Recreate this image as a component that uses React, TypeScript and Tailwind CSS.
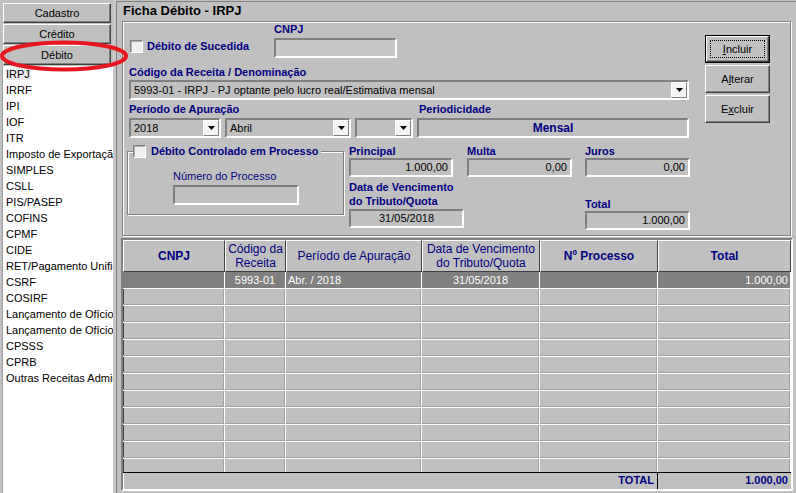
import React from 'react';

const sunken = 'border-2 border-t-[#808080] border-l-[#808080] border-b-white border-r-white';
const lbl = 'text-[11px] font-bold text-[#000080] leading-[14px] whitespace-nowrap';

function Check() {
  return (
    <span className="inline-block w-[13px] h-[13px] shrink-0 bg-[#f0f0f0] border border-t-[#808080] border-l-[#808080] border-b-white border-r-white shadow-[inset_1px_1px_0_#b0b0b0]" />
  );
}

function Arrow() {
  return (
    <div className="w-[16px] shrink-0 flex items-center justify-center bg-[#f4f4f4] border border-t-white border-l-white border-b-[#808080] border-r-[#808080]">
      <svg width="7" height="4" viewBox="0 0 7 4">
        <path d="M0 0H7L3.5 4Z" fill="#000" />
      </svg>
    </div>
  );
}

function Select({ className, children }: { className: string; children?: React.ReactNode }) {
  return (
    <div className={`flex h-[20px] bg-[#c0c0c0] ${sunken} ${className}`}>
      <div className="flex-1 flex items-center pl-[3px] overflow-hidden whitespace-nowrap text-[11px] text-black">
        {children}
      </div>
      <Arrow />
    </div>
  );
}

function Field({ className, children, center }: { className: string; children?: React.ReactNode; center?: boolean }) {
  return (
    <div
      className={`flex items-center bg-[#c0c0c0] text-[11px] text-black whitespace-nowrap px-[3px] ${
        center ? 'justify-center' : 'justify-end'
      } ${sunken} ${className}`}
    >
      {children}
    </div>
  );
}

function WinBtn({ children, focused }: { children: React.ReactNode; focused?: boolean }) {
  if (focused) {
    return (
      <div className="h-[28px] border border-black flex">
        <div className="flex-1 flex p-[3px] bg-[#c0c0c0] border border-t-white border-l-white border-b-[#404040] border-r-[#404040] shadow-[inset_-1px_-1px_0_#808080]">
          <div className="flex-1 flex items-center justify-center border border-dotted border-black text-[11px] text-black">
            {children}
          </div>
        </div>
      </div>
    );
  }
  return (
    <div className="h-[28px] flex items-center justify-center bg-[#c0c0c0] border border-t-white border-l-white border-b-[#404040] border-r-[#404040] shadow-[inset_-1px_-1px_0_#808080] text-[11px] text-black">
      {children}
    </div>
  );
}

function NavBtn({ children }: { children: React.ReactNode }) {
  return (
    <div className="h-[20px] flex items-center justify-center bg-[#c0c0c0] border border-t-white border-l-white border-b-[#404040] border-r-[#404040] shadow-[inset_-1px_-1px_0_#808080] text-[11px] text-black">
      {children}
    </div>
  );
}

const items = [
  'IRPJ',
  'IRRF',
  'IPI',
  'IOF',
  'ITR',
  'Imposto de Exportação',
  'SIMPLES',
  'CSLL',
  'PIS/PASEP',
  'COFINS',
  'CPMF',
  'CIDE',
  'RET/Pagamento Unificado',
  'CSRF',
  'COSIRF',
  'Lançamento de Ofício',
  'Lançamento de Ofício',
  'CPSSS',
  'CPRB',
  'Outras Receitas Administradas',
];

const colW = ['w-[102px]', 'w-[61px]', 'w-[136px]', 'w-[118px]', 'w-[118px]', 'w-[133px]'];

const headers: { node: React.ReactNode; bold?: boolean }[] = [
  { node: 'CNPJ', bold: true },
  { node: (<>Código da<br />Receita</>) },
  { node: 'Período de Apuração' },
  { node: (<>Data de Vencimento<br />do Tributo/Quota</>) },
  { node: 'Nº Processo', bold: true },
  { node: 'Total', bold: true },
];

function Row({ dark }: { dark?: boolean }) {
  const vals = dark ? ['', '5993-01', 'Abr. / 2018', '31/05/2018', '', '1.000,00'] : ['', '', '', '', '', ''];
  const aligns = ['text-left', 'text-center', 'text-left', 'text-center', 'text-left', 'text-right'];
  return (
    <div className="flex h-[17px]">
      {vals.map((v, i) => (
        <div
          key={i}
          className={`${colW[i]} ${aligns[i]} shrink-0 border-b border-r border-white text-[11px] leading-[16px] px-[2px] whitespace-nowrap overflow-hidden ${
            dark ? 'bg-[#808080] text-white' : 'shadow-[inset_-1px_-1px_0_#a0a0a0]'
          }`}
        >
          {v}
        </div>
      ))}
    </div>
  );
}

export default function App() {
  return (
    <div className="relative flex w-[796px] h-[493px] overflow-hidden bg-[#c0c0c0] font-['Liberation_Sans',Arial,sans-serif] text-black">
      {/* Left panel */}
      <div className="w-[113px] shrink-0 flex flex-col">
        <div className="pt-[3px] pl-[3px] pr-[2px] flex flex-col gap-[1px]">
          <NavBtn>Cadastro</NavBtn>
          <NavBtn>Crédito</NavBtn>
          <NavBtn>Débito</NavBtn>
        </div>
        <div className="flex-1 mt-[1px] ml-[2px] bg-white border-l border-[#a0a0a0] pl-[3px] overflow-hidden">
          {items.map((t, i) => (
            <div key={i} className="h-[16px] leading-[16px] text-[11px] whitespace-nowrap overflow-hidden">
              {i === 0 ? <span className="bg-[#ececec] pr-[1px]">{t}</span> : t}
            </div>
          ))}
        </div>
      </div>

      {/* Splitter */}
      <div className="w-[3px] shrink-0 bg-[#c8c8c8]" />

      {/* Right panel */}
      <div className="flex-1 flex flex-col mt-[1px] border-l border-t border-[#808080]">
        <div className="h-[19px] pl-[6px] text-[13px] font-bold leading-[17px] text-black">Ficha Débito - IRPJ</div>

        {/* Group box */}
        <div className="ml-[5px] mr-[5px] h-[215px] flex border border-[#808080] shadow-[inset_1px_1px_0_#fff,1px_1px_0_#fff]">
          <div className="w-[572px] flex flex-col">
            {/* Row 1 */}
            <div className="flex h-[36px]">
              <div className="ml-[7px] w-[144px] self-end mb-[2px] h-[20px] flex items-center gap-[4px]">
                <Check />
                <span className={lbl}>Débito de Sucedida</span>
              </div>
              <div className="flex flex-col">
                <div className={`${lbl} h-[16px]`}>CNPJ</div>
                <div className={`h-[20px] w-[123px] bg-[#c6c6c6] ${sunken}`} />
              </div>
            </div>
            {/* Row 2 */}
            <div className={`${lbl} mt-[7px] ml-[6px] h-[15px] leading-[15px]`}>Código da Receita / Denominação</div>
            <Select className="ml-[6px] w-[560px]">5993-01 - IRPJ - PJ optante pelo lucro real/Estimativa mensal</Select>
            {/* Row 3 */}
            <div className="flex mt-[2px] h-[16px] ml-[6px]">
              <div className={`${lbl} w-[290px]`}>Período de Apuração</div>
              <div className={lbl}>Periodicidade</div>
            </div>
            <div className="flex ml-[6px] gap-[4px]">
              <Select className="w-[92px]">2018</Select>
              <Select className="w-[126px]">Abril</Select>
              <Select className="w-[58px]" />
              <div className={`h-[20px] w-[272px] flex items-center justify-center bg-[#c0c0c0] text-[12px] font-bold text-[#000080] ${sunken}`}>
                Mensal
              </div>
            </div>
            {/* Row 4 */}
            <div className="flex">
              <div className="relative ml-[4px] mt-[13px] w-[217px] h-[64px] border border-[#808080] shadow-[inset_1px_1px_0_#fff,1px_1px_0_#fff] pl-[45px] pt-[17px]">
                <div className="absolute -top-[8px] left-[5px] flex items-center gap-[5px] bg-[#c0c0c0] pr-[3px]">
                  <Check />
                  <span className={lbl}>Débito Controlado em Processo</span>
                </div>
                <div className="text-[11px] leading-[14px] text-[#000080] whitespace-nowrap">Número do Processo</div>
                <div className={`mt-[2px] h-[20px] w-[126px] bg-[#c0c0c0] ${sunken}`} />
              </div>
              <div className="ml-[5px] flex flex-col">
                <div className="flex">
                  <div className="w-[104px] flex flex-col">
                    <div className={`${lbl} mt-[6px]`}>Principal</div>
                    <Field className="h-[19px]">1.000,00</Field>
                  </div>
                  <div className="ml-[14px] w-[105px] flex flex-col">
                    <div className={`${lbl} mt-[6px]`}>Multa</div>
                    <Field className="h-[19px]">0,00</Field>
                  </div>
                  <div className="ml-[13px] w-[105px] flex flex-col">
                    <div className={`${lbl} mt-[6px]`}>Juros</div>
                    <Field className="h-[19px]">0,00</Field>
                  </div>
                </div>
                <div className="flex">
                  <div className="w-[115px] flex flex-col">
                    <div className={`${lbl} mt-[3px]`}>
                      Data de Vencimento
                      <br />
                      do Tributo/Quota
                    </div>
                    <Field className="mt-[1px] h-[19px]" center>
                      31/05/2018
                    </Field>
                  </div>
                  <div className="ml-[121px] w-[105px] flex flex-col mt-[20px]">
                    <div className={lbl}>Total</div>
                    <Field className="h-[19px]">1.000,00</Field>
                  </div>
                </div>
              </div>
            </div>
          </div>
          {/* Buttons */}
          <div className="ml-[10px] mt-[13px] w-[65px] flex flex-col gap-[2px]">
            <WinBtn focused>
              <span className="underline">I</span>ncluir
            </WinBtn>
            <WinBtn>
              A<span className="underline">l</span>terar
            </WinBtn>
            <WinBtn>
              E<span className="underline">x</span>cluir
            </WinBtn>
          </div>
        </div>

        {/* Table */}
        <div className="mt-[2px] ml-[4px] mr-[3px] h-[253px] flex flex-col border-2 border-t-[#808080] border-l-[#808080] border-b-white border-r-white shadow-[inset_1px_1px_0_#404040]">
          <div className="flex h-[32px] shrink-0">
            {headers.map((h, i) => (
              <div
                key={i}
                className={`${colW[i]} shrink-0 flex items-center justify-center text-center text-[12px] leading-[14px] text-[#000080] border border-t-white border-l-white border-b-[#404040] border-r-[#404040] ${
                  h.bold ? 'font-bold' : ''
                }`}
              >
                <div>{h.node}</div>
              </div>
            ))}
          </div>
          <div className="h-[200px] shrink-0 overflow-hidden">
            <Row dark />
            {Array.from({ length: 11 }).map((_, i) => (
              <Row key={i} />
            ))}
          </div>
          <div className="flex h-[17px] shrink-0 border-t border-black text-[11px] font-bold text-[#000080] leading-[15px]">
            <div className="w-[535px] border-r border-black text-right pr-[3px] shadow-[inset_1px_0_0_#fff]">TOTAL</div>
            <div className="flex-1 text-right pr-[3px]">1.000,00</div>
          </div>
        </div>
      </div>

      {/* Red highlight ellipse */}
      <svg className="absolute left-0 top-0 pointer-events-none" width="140" height="90" viewBox="0 0 140 90">
        <ellipse cx="64" cy="56" rx="62" ry="13.5" fill="none" stroke="#e8161e" strokeWidth="4" />
      </svg>
    </div>
  );
}
